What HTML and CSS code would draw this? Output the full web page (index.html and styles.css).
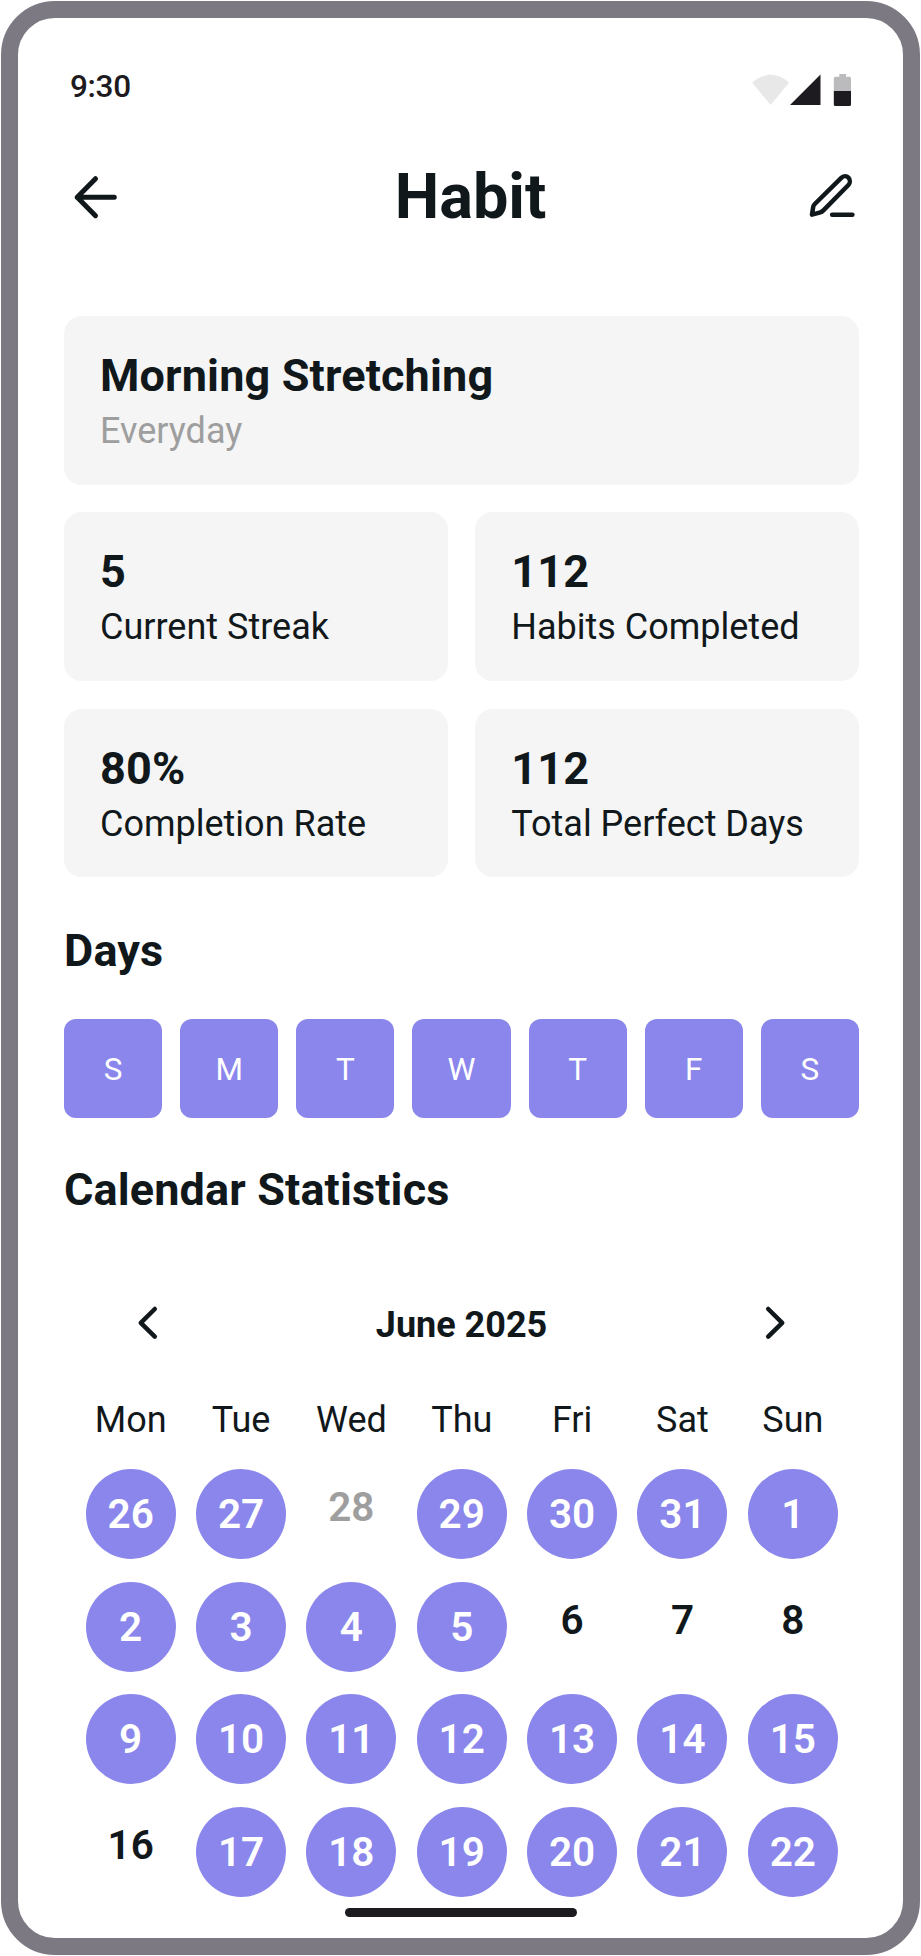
FILE: index.html
```html
<!DOCTYPE html>
<html lang="en">
<head>
<meta charset="utf-8">
<title>Habit</title>
<link rel="stylesheet" href="styles.css">
</head>
<body>
<div class="phone">
  <div class="status">
    <span class="time">9:30</span>
    <svg class="status-icons" width="101" height="34" viewBox="751 73 101 34">
      <path d="M752.3 82.7C757.5 77.5 764 74.7 770.6 74.7S783.800 77.500 789 82.700L770.6 105Z" fill="#e8e8e8"/>
      <path d="M790 105H820.500V74.500Z" fill="#1d1b20"/>
      <path d="M839.300 74H846V76.800H849.500a1.500 1.500 0 0 1 1.500 1.500V91H833.800V78.300a1.500 1.500 0 0 1 1.500-1.500H839.300Z" fill="#bbbabc"/>
      <path d="M833.800 91H851V104.500a1.500 1.500 0 0 1-1.500 1.500H835.300a1.500 1.500 0 0 1-1.500-1.500Z" fill="#1d1b20"/>
    </svg>
  </div>
  <header class="header">
    <svg class="icon" width="54" height="54" viewBox="68 170 54 54" stroke-width="5">
      <path d="M95.500 178.700L77.200 197.200L95.500 215.700M77.200 197.200H114.300"/>
    </svg>
    <h1 class="title">Habit</h1>
    <svg class="icon" width="54" height="54" viewBox="805 170 54 54" stroke-width="4.500">
      <path d="M841.300 177.900C843.400 175.800 846.500 175.700 848.400 177.600C850.300 179.500 850.300 182.900 848.400 185L823.400 210.400C822.400 211.400 821.700 212 820.400 212.300L812 214.700L813.200 206.900C813.400 205.600 813.800 205 814.800 204Z"/>
      <path d="M832.100 214.800H852.400"/>
    </svg>
  </header>
  <main class="content">
    <section class="cards">
      <div class="card wide"><div class="value">Morning Stretching</div><div class="label muted">Everyday</div></div>
      <div class="card"><div class="value">5</div><div class="label">Current Streak</div></div>
      <div class="card"><div class="value">112</div><div class="label">Habits Completed</div></div>
      <div class="card"><div class="value">80%</div><div class="label">Completion Rate</div></div>
      <div class="card"><div class="value">112</div><div class="label">Total Perfect Days</div></div>
    </section>
    <h2 class="section-title days-title">Days</h2>
    <div class="days">
      <span class="day">S</span><span class="day">M</span><span class="day">T</span><span class="day">W</span><span class="day">T</span><span class="day">F</span><span class="day">S</span>
    </div>
    <h2 class="section-title stats-title">Calendar Statistics</h2>
    <div class="month">
      <svg class="icon" width="36" height="36" viewBox="130 1305 36 36" stroke-width="4.500"><path d="M154.800 1309L140.800 1322.800L154.800 1336.600"/></svg>
      <span class="month-name">June 2025</span>
      <svg class="icon" width="36" height="36" viewBox="757 1305 36 36" stroke-width="4.500"><path d="M768.200 1309L782.200 1322.800L768.200 1336.600"/></svg>
    </div>
    <div class="weekdays">
      <span>Mon</span><span>Tue</span><span>Wed</span><span>Thu</span><span>Fri</span><span>Sat</span><span>Sun</span>
    </div>
    <div class="calendar">
      <span class="date done">26</span><span class="date done">27</span><span class="date other">28</span><span class="date done">29</span><span class="date done">30</span><span class="date done">31</span><span class="date done">1</span>
      <span class="date done">2</span><span class="date done">3</span><span class="date done">4</span><span class="date done">5</span><span class="date">6</span><span class="date">7</span><span class="date">8</span>
      <span class="date done">9</span><span class="date done">10</span><span class="date done">11</span><span class="date done">12</span><span class="date done">13</span><span class="date done">14</span><span class="date done">15</span>
      <span class="date">16</span><span class="date done">17</span><span class="date done">18</span><span class="date done">19</span><span class="date done">20</span><span class="date done">21</span><span class="date done">22</span>
    </div>
  </main>
  <div class="home-bar"></div>
</div>
</body>
</html>
```
FILE: styles.css
```css
* { box-sizing: border-box; }
body {
  margin: 0;
  padding: 1px;
  background: #fff;
  color: #11181b;
  font-family: Roboto, "Liberation Sans", sans-serif;
}
.phone {
  width: 919px;
  height: 1954px;
  border: 17px solid #7d7983;
  border-radius: 54px;
  background: #fff;
  display: flex;
  flex-direction: column;
  overflow: hidden;
}
.status {
  height: 116px;
  flex: none;
  padding: 49px 51px 0 52px;
  display: flex;
  justify-content: space-between;
  align-items: flex-start;
}
.status-icons { margin-top: 6px; }
.time {
  color: #1d1b20;
  font-size: 31.5px;
  font-weight: 500;
  line-height: 40px;
  letter-spacing: -0.3px;
}
.header {
  height: 130px;
  flex: none;
  padding: 36px 44px 0 50px;
  display: grid;
  grid-template-columns: 54px 1fr 54px;
  align-items: start;
}
.icon { fill: none; stroke: #11181b; stroke-linecap: round; stroke-linejoin: round; }
.title {
  margin: -11px 0 0;
  padding-left: 14px;
  font-size: 63px;
  font-weight: 700;
  line-height: 76px;
  text-align: center;
}
.content { padding: 52px 44px 0 46px; }
.cards {
  display: grid;
  grid-template-columns: 1fr 1fr;
  gap: 27.5px;
}
.card {
  height: 168.75px;
  padding: 33px 36px 0;
  border-radius: 18px;
  background: #f5f5f5;
}
.wide { grid-column: 1 / -1; }
.value { font-size: 45px; font-weight: 700; line-height: 54px; letter-spacing: 0.15px; }
.label { font-size: 36px; line-height: 56px; white-space: nowrap; }
.muted { color: #9e9e9e; }
.section-title { margin: 0; font-size: 45px; font-weight: 700; line-height: 54px; letter-spacing: 0.13px; }
.days-title { margin-top: 47px; }
.days {
  margin-top: 41px;
  display: grid;
  grid-template-columns: repeat(7, 1fr);
  gap: 18px;
}
.day {
  height: 98.5px;
  border-radius: 12px;
  background: #8a86eb;
  color: #fff;
  font-size: 31.5px;
  line-height: 101px;
  text-align: center;
}
.stats-title { margin-top: 45px; }
.month {
  margin-top: 88px;
  padding: 0 66px;
  height: 44px;
  display: flex;
  justify-content: space-between;
}
.month-name { font-size: 36px; font-weight: 700; line-height: 40px; }
.weekdays, .calendar {
  margin: 0 11px 0 11.5px;
  display: grid;
  grid-template-columns: repeat(7, 1fr);
  justify-items: center;
}
.weekdays { margin-top: 50px; font-size: 36px; line-height: 42px; }
.calendar { margin-top: 28.5px; row-gap: 22.5px; }
.date {
  width: 90px;
  height: 90px;
  font-size: 40.5px;
  font-weight: 600;
  line-height: 76px;
  text-align: center;
}
.done { border-radius: 50%; background: #8a86eb; color: #fff; line-height: 91px; }
.other { color: #9e9e9e; }
.home-bar {
  width: 232px;
  height: 9px;
  margin: 11px auto 0;
  flex: none;
  border-radius: 4.5px;
  background: #1d1b20;
}
```
